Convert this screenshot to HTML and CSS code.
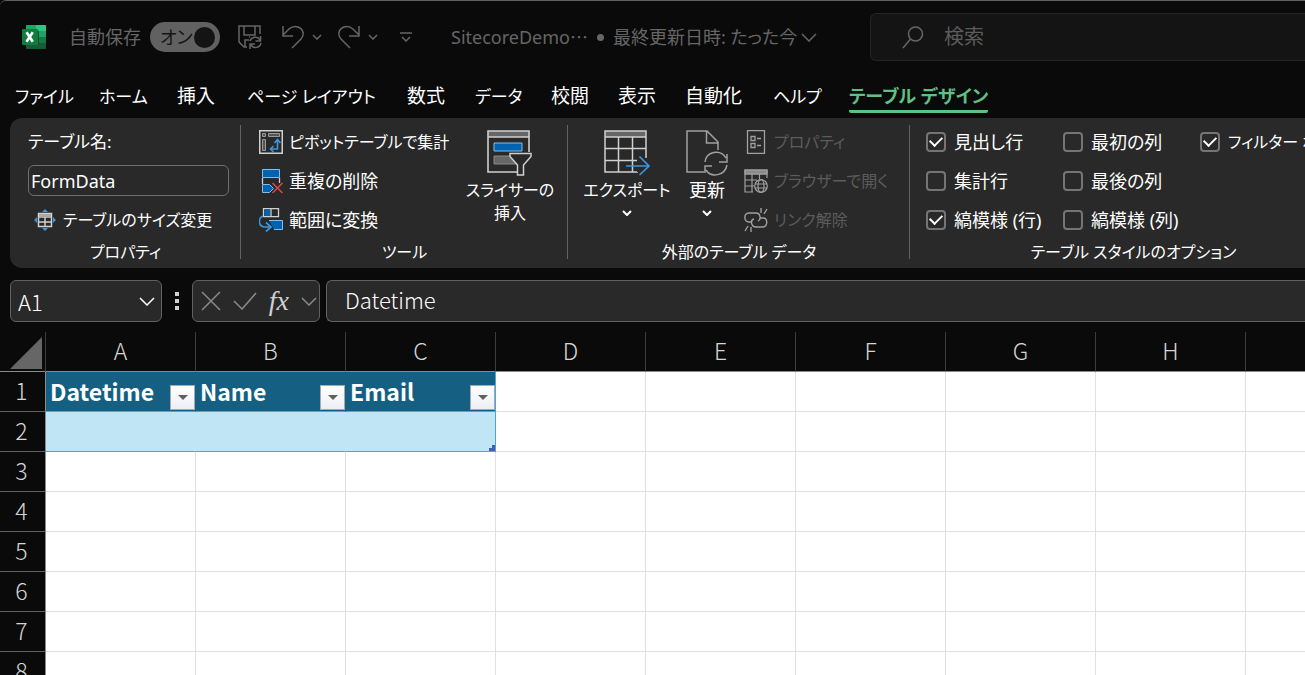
FILE: index.html
```html
<!DOCTYPE html>
<html lang="ja">
<head>
<meta charset="utf-8">
<meta name="viewport" content="width=device-width, initial-scale=1">
<title>SitecoreDemo</title>
<link rel="stylesheet" href="styles.css">
</head>
<body>
<header class="titlebar">
  <div class="quick">
    <svg class="logo" width="24" height="24" viewBox="0 0 24 24" aria-label="Excel"><rect x="4" width="20" height="24" rx="1" fill="#185c37"/><path d="M5 0h9v6H4V1q0-1 1-1z" fill="#21a366"/><path d="M14 0h9q1 0 1 1v5H14z" fill="#33c481"/><path d="M4 6h10v6H4z" fill="#107c41"/><path d="M14 6h10v6H14z" fill="#21a366"/><path d="M14 12h10v6H14z" fill="#107c41"/><path d="M4 5h11q2 0 2 2v11q0 2-2 2H4z" fill="#0b4d29"/><rect y="4" width="16" height="16" rx="1" fill="#107c41"/><path d="M4.500 7.300 10.800 16.700M10.800 7.300 4.500 16.700" stroke="#fff" stroke-width="2.600" fill="none"/></svg>
    <span class="autosave" id="autosave">自動保存</span>
    <button class="switch" role="switch" aria-checked="true" aria-labelledby="autosave"><span>オン</span><i class="knob"></i></button>
    <button class="icon save" aria-label="保存"><svg width="24" height="24" viewBox="0 0 24 24"><path d="M9 22H6L1 17V1h21v8M6 1v9h11V1M7 22v-7h4M12 12h-1" /><path d="M12 16a5.500 5.500 0 0 1 10-1M22.500 11v5h-5M23 18a5.500 5.500 0 0 1-10 2M12 24v-5h5"/></svg></button>
    <button class="icon undo" aria-label="元に戻す"><svg width="24" height="24" viewBox="0 0 24 24"><path d="M2 1v10h10M2 10 8 4c8-7 19 2 12 10l-9 9"/></svg></button>
    <button class="icon caret" aria-label="元に戻すの一覧"><svg width="10" height="6" viewBox="0 0 10 6"><path d="m1 1 4 4 4-4"/></svg></button>
    <button class="icon redo" aria-label="やり直し"><svg width="24" height="24" viewBox="0 0 24 24"><path d="M22 1v10H12M22 10l-6-6C8-3-3 6 4 14l9 9"/></svg></button>
    <button class="icon caret" aria-label="やり直しの一覧"><svg width="10" height="6" viewBox="0 0 10 6"><path d="m1 1 4 4 4-4"/></svg></button>
    <button class="icon customize" aria-label="クイック アクセス ツール バーのユーザー設定"><svg width="12" height="10" viewBox="0 0 12 10"><path d="M0 1h12M2 5l4 4 4-4"/></svg></button>
  </div>
  <button class="doc"><span>SitecoreDemo⋯</span><i class="dot"></i><span>最終更新日時: たった今</span><svg width="16" height="9" viewBox="0 0 16 9"><path d="m1 1 7 7 7-7"/></svg></button>
  <label class="search"><svg width="22" height="23" viewBox="0 0 22 23"><circle cx="13.500" cy="8" r="7"/><path d="M8.500 13 1 22"/></svg><input type="search" placeholder="検索" aria-label="検索"></label>
</header>

<nav class="tabs">
  <a class="kana" href="#file">ファイル</a><a class="kana" href="#home">ホーム</a><a href="#insert">挿入</a><a class="kana" href="#layout">ページ レイアウト</a><a href="#formulas">数式</a><a class="kana" href="#data">データ</a><a href="#review">校閲</a><a href="#view">表示</a><a href="#automate">自動化</a><a class="kana" href="#help">ヘルプ</a><a class="active" href="#design" aria-current="page">テーブル デザイン</a>
</nav>

<main class="ribbon">
  <section class="group props">
    <div class="rows">
      <label for="tname">テーブル名:</label>
      <input class="tname" id="tname" value="FormData">
      <button class="cmd kana resize"><svg width="24" height="24" viewBox="0 0 24 24"><path d="m12 1 3 3H9zM12 23l3-3H9zM1 12l3-3v6zM23 12l-3-3v6z" fill="#3a96dd"/><path d="M5.500 5.500h13v13h-13zM5.500 9h13M12 9v9M6 14h12" fill="none" stroke="#d0d0d0" stroke-width="1.500"/><path d="M6 6h12v2H6z" fill="#aaa"/></svg>テーブルのサイズ変更</button>
    </div>
    <h2>プロパティ</h2>
  </section>

  <section class="group tools">
    <div class="cols">
      <div class="rows">
        <button class="cmd kana"><svg width="24" height="24" viewBox="0 0 24 24"><path d="M.75.75h22.500v22.500H.75z" fill="none" stroke="#d0d0d0" stroke-width="1.500"/><path d="M3.500 3.500h3v3h-3zM9.500 3.500h11v3h-11zM3.500 9.500h3v11h-3z" fill="#555" stroke="#999"/><path d="M12 19h6.500v-8M15.500 13l3-3.500 3 3.500M14.500 16l-3 3 3 3" fill="none" stroke="#3a96dd" stroke-width="1.600"/></svg>ピボットテーブルで集計</button>
        <button class="cmd"><svg width="24" height="24" viewBox="0 0 24 24"><path d="M3.500.5h17v8h-17z" fill="#0063b1" stroke="#83beec"/><path d="M3.500 9v6M20.500 9v5" stroke="#d0d0d0" stroke-width="1.300"/><path d="M3.500 15.500h7l4 4-4 4h-7z" fill="#0063b1" stroke="#83beec"/><path d="m13.500 14 10 10M23.500 14l-10 10" stroke="#e04848" stroke-width="1.500"/></svg>重複の削除</button>
        <button class="cmd"><svg width="24" height="24" viewBox="0 0 24 24"><path d="M4.500.7h15v8h-15zM12 1v7.500" fill="none" stroke="#d0d0d0" stroke-width="1.300"/><path d="M5.500 1.500H11v6.500H5.500z" fill="#0063b1"/><path d="M10 12.500h13.500v9H15" fill="#0063b1" stroke="#83beec"/><path d="M4 8C-1 10-1 18 5 19h7M7 14.500l5 4.500-5 4.500" fill="none" stroke="#3a96dd" stroke-width="1.700"/></svg>範囲に変換</button>
      </div>
      <button class="big kana slicer"><svg width="46" height="46" viewBox="0 0 46 46"><path d="M1 1h41v6H1z" fill="#666"/><path d="M42 22V1H1v41h29M1 7h41" fill="none" stroke="#d0d0d0" stroke-width="1.600"/><path d="M7 13h28v8H7z" fill="#0063b1" stroke="#83beec"/><path d="M7 26h17l5 6v2H7z" fill="#666" stroke="#888"/><path d="M23 23.500h21v3L36.500 35v10h-6V35L23 26.500z" fill="#292929" stroke="#d0d0d0" stroke-width="1.500"/></svg><span>スライサーの<br>挿入</span></button>
    </div>
    <h2>ツール</h2>
  </section>

  <section class="group external">
    <div class="cols">
      <button class="big kana export"><svg width="46" height="46" viewBox="0 0 46 46"><path d="M1 1h41v6H1z" fill="#666"/><path d="M42 28V1H1v41h33M1 7h41M1 18.500h41M1 30.500h32M14.500 7v35M28.500 7v35" fill="none" stroke="#d0d0d0" stroke-width="1.500"/><path d="M33 28v14h10V28z" fill="#292929"/><path d="M22 36h23M35.500 26.500 45 36l-9.500 9" fill="none" stroke="#3a96dd" stroke-width="1.700"/></svg><span>エクスポート</span><svg class="down" width="10" height="6" viewBox="0 0 10 6"><path d="m1 1 4 4 4-4"/></svg></button>
      <button class="big refresh"><svg width="42" height="46" viewBox="0 0 42 46" fill="none" stroke="#a0a0a0" stroke-width="1.500"><path d="M18 42H1V1h20l11 11v8M20.500 1v12H32"/><path d="M19 32c1-10 15-14 21-4M41 24v8h-8M41 35c-2 11-16 13-21 5M19 43v-7h7"/></svg><span>更新</span><svg class="down" width="10" height="6" viewBox="0 0 10 6"><path d="m1 1 4 4 4-4"/></svg></button>
      <div class="rows">
        <button class="cmd kana" disabled><svg width="24" height="24" viewBox="0 0 24 24" fill="none" stroke="#a0a0a0" stroke-width="1.300"><path d="M3.500.7h17v22.600h-17zM7 6.500h4v4H7zM7 13.500h4v4H7zM13 8.500h4M13 15.500h4"/></svg>プロパティ</button>
        <button class="cmd kana" disabled><svg width="24" height="24" viewBox="0 0 24 24" fill="none" stroke="#a0a0a0" stroke-width="1.200"><path d="M1 1h22v4H1z" fill="#888"/><path d="M9 23H1V1h22v8M1 5h22M1 11h12M1 17h9M8 5v18M15.500 5v5"/><circle cx="17" cy="17" r="6.300"/><ellipse cx="17" cy="17" rx="3" ry="6.300"/><path d="M11 15h12M11 19h12"/></svg>ブラウザーで開く</button>
        <button class="cmd kana" disabled><svg width="24" height="24" viewBox="0 0 24 24" fill="none" stroke="#a0a0a0" stroke-width="1.400"><path d="M8 14H5C0 14-1 5 5 5h7c5 0 5 7 2 8M16 10h3c5 0 5 8 0 9h-7c-5 0-6-7-2-8M17 5V0M20 6l3-5M7 19v5M4 18l-3 5"/></svg>リンク解除</button>
      </div>
    </div>
    <h2>外部のテーブル データ</h2>
  </section>

  <section class="group options">
    <div class="checks">
      <label><input type="checkbox" checked>見出し行</label>
      <label><input type="checkbox">最初の列</label>
      <label class="kana"><input type="checkbox" checked>フィルター ボタン</label>
      <label><input type="checkbox">集計行</label>
      <label><input type="checkbox">最後の列</label>
      <span></span>
      <label><input type="checkbox" checked>縞模様 (行)</label>
      <label><input type="checkbox">縞模様 (列)</label>
    </div>
    <h2>テーブル スタイルのオプション</h2>
  </section>
</main>

<div class="formula">
  <div class="box namebox"><input value="A1" aria-label="名前ボックス"><button class="icon" aria-label="名前の一覧"><svg width="16" height="9" viewBox="0 0 16 9"><path d="m1 1 7 7 7-7"/></svg></button></div>
  <div class="grip"><i></i><i></i><i></i></div>
  <div class="box actions">
    <button class="icon dim" aria-label="キャンセル"><svg width="20" height="20" viewBox="0 0 20 20"><path d="m1 1 18 18M19 1 1 19"/></svg></button>
    <button class="icon dim" aria-label="入力"><svg width="24" height="18" viewBox="0 0 24 18"><path d="m1 9 8 8L23 1"/></svg></button>
    <button class="icon fx" aria-label="関数の挿入">fx</button>
    <button class="icon dim" aria-label="関数の一覧"><svg width="16" height="9" viewBox="0 0 16 9"><path d="m1 1 7 7 7-7"/></svg></button>
  </div>
  <input class="box value" value="Datetime" aria-label="数式バー">
</div>

<div class="sheet">
  <table>
    <colgroup><col class="rowcol"><col class="cell"><col class="cell"><col class="cell"><col class="cell"><col class="cell"><col class="cell"><col class="cell"><col class="cell"><col></colgroup>
    <thead><tr><th class="corner"><svg width="32" height="32" viewBox="0 0 32 32"><path d="M32 0v32H0z" fill="#666"/></svg></th><th>A</th><th>B</th><th>C</th><th>D</th><th>E</th><th>F</th><th>G</th><th>H</th><th></th></tr></thead>
    <tbody>
      <tr class="head"><th>1</th>
        <td><div class="field">Datetime<button aria-label="Datetime フィルター"><i></i></button></div></td>
        <td><div class="field">Name<button aria-label="Name フィルター"><i></i></button></div></td>
        <td><div class="field">Email<button aria-label="Email フィルター"><i></i></button></div></td>
        <td></td><td></td><td></td><td></td><td></td><td></td></tr>
      <tr class="band"><th>2</th><td></td><td></td><td><div class="corner-mark"><svg width="6" height="6" viewBox="0 0 6 6"><path d="M3 0h3v6H0V3h3z" fill="#4a5ab5"/></svg></div></td><td></td><td></td><td></td><td></td><td></td><td></td></tr>
      <tr><th>3</th><td></td><td></td><td></td><td></td><td></td><td></td><td></td><td></td><td></td></tr>
      <tr><th>4</th><td></td><td></td><td></td><td></td><td></td><td></td><td></td><td></td><td></td></tr>
      <tr><th>5</th><td></td><td></td><td></td><td></td><td></td><td></td><td></td><td></td><td></td></tr>
      <tr><th>6</th><td></td><td></td><td></td><td></td><td></td><td></td><td></td><td></td><td></td></tr>
      <tr><th>7</th><td></td><td></td><td></td><td></td><td></td><td></td><td></td><td></td><td></td></tr>
      <tr><th>8</th><td></td><td></td><td></td><td></td><td></td><td></td><td></td><td></td><td></td></tr>
    </tbody>
  </table>
</div>
</body>
</html>
```
FILE: styles.css
```css
* { box-sizing: border-box; }
body {
  margin: 0;
  height: 100vh;
  display: flex;
  flex-direction: column;
  overflow: hidden;
  background: #0a0a0a;
  color: #fff;
  font: 18px/24px "Noto Sans", "Noto Sans CJK JP", sans-serif;
  font-feature-settings: "palt";
}
button, input { font: inherit; font-feature-settings: inherit; color: inherit; }
button { background: none; border: 0; padding: 0; white-space: nowrap; }
input { min-width: 0; outline: 0; }
svg { display: block; flex: none; }
.kana { font-size: 16px; }

.titlebar {
  flex: none;
  display: flex;
  align-items: center;
  height: 73px;
  border-top: 1px solid #616161;
  border-top-left-radius: 6px;
  color: #666;
}
.quick { display: flex; align-items: center; width: 451px; flex: none; padding-left: 22px; }
.autosave { width: 81px; margin-left: 23px; }
.switch {
  display: flex;
  align-items: center;
  justify-content: space-between;
  width: 70px;
  height: 30px;
  padding: 0 5px 0 10px;
  border-radius: 15px;
  background: #616161;
  color: #141414;
}
.knob { width: 21px; height: 21px; border-radius: 50%; background: #141414; }
.icon { display: flex; align-items: center; justify-content: center; }
.icon svg, .doc svg, .search svg, .down { fill: none; stroke: currentColor; stroke-width: 1.5; }
.save { margin-left: 18px; }
.undo { margin-left: 19px; }
.redo { margin-left: 15px; }
.caret { margin-left: 7px; }
.customize { margin-left: 22px; }
.doc { display: flex; align-items: center; width: 419px; flex: none; }
.dot { width: 7px; height: 7px; margin: 0 9px; border-radius: 50%; background: #666; }
.doc svg { margin-left: 4px; }
.search {
  flex: 1;
  display: flex;
  align-items: center;
  height: 48px;
  padding-left: 31px;
  gap: 20px;
  border: 1px solid #242424;
  border-right: 0;
  border-radius: 6px 0 0 6px;
  background: #141414;
}
.search input { flex: 1; border: 0; padding: 0; background: none; font-size: 20px; }
.search input::placeholder { color: #5c5c5c; opacity: 1; }

.tabs {
  flex: none;
  display: grid;
  grid-template-columns: 84px 78px 70px 160px 68px 76px 67px 67px 88px 76px auto;
  justify-content: start;
  height: 45px;
  padding: 10px 0 5px 15px;
  font-size: 19px;
}
.tabs a { color: #fff; text-decoration: none; white-space: nowrap; line-height: 27px; }
.tabs .kana { font-size: 17px; }
.tabs .active { color: #5fbf84; font-size: 18px; font-weight: 700; border-bottom: 3px solid #5fbf84; border-radius: 2px; }

.ribbon {
  flex: none;
  display: flex;
  margin-left: 10px;
  padding: 4px 0 2px;
  border-radius: 12px 0 0 12px;
  background: #292929;
  overflow: hidden;
}
.group { display: flex; flex-direction: column; flex: none; position: relative; }
.group::after { content: ""; position: absolute; right: 0; top: 3px; bottom: 7px; width: 1px; background: #616161; }
.group h2 { margin: 0; font-size: 16px; font-weight: 400; line-height: 27px; text-align: center; }
.rows { display: grid; grid-template-rows: repeat(3, 39px); align-items: center; justify-items: start; }
.cols { display: flex; }
.cmd { display: flex; align-items: center; gap: 6px; }
.cmd:disabled { color: #5c5c5c; }
.props { width: 231px; }
.props .rows { padding: 0 12px 0 18px; justify-items: stretch; }
.props label { font-size: 17px; }
.tname { height: 31px; padding: 0 2px; border: 1px solid #707070; border-radius: 6px; background: #292929; }
.resize { padding-left: 5px; }
.tools { width: 327px; }
.tools .rows { width: 211px; padding-left: 18px; }
.external { width: 342px; }
.external .rows { padding-left: 5px; }
.big { display: flex; flex-direction: column; align-items: center; padding-top: 8px; line-height: 23px; }
.big > span { margin-top: 3px; }
.slicer { flex: 1; }
.export { width: 107px; padding-left: 11px; }
.refresh { width: 64px; }
.down { margin-top: 8px; stroke-width: 2; }
.options { flex: 1 0 auto; width: 447px; }
.options::after { display: none; }
.checks { display: grid; grid-template-columns: 137px 137px 200px; grid-template-rows: repeat(3, 39px); padding-left: 16px; }
.checks label { display: flex; align-items: center; gap: 8px; white-space: nowrap; }
.checks input {
  appearance: none;
  display: grid;
  place-items: center;
  flex: none;
  width: 20px;
  height: 20px;
  margin: 0;
  border: 2px solid #757575;
  border-radius: 4px;
}
.checks input:checked::before {
  content: "";
  width: 10px;
  height: 6px;
  margin-bottom: 3px;
  border: solid #fff;
  border-width: 0 0 2px 2px;
  transform: rotate(-45deg);
}

.formula { flex: none; display: flex; height: 64px; padding: 12px 0 10px 10px; font-family: "Noto Sans CJK JP", sans-serif; font-size: 22px; font-weight: 300; }
.box { display: flex; align-items: center; height: 42px; border: 1px solid #616161; border-radius: 6px; background: #292929; }
.namebox { width: 152px; padding: 0 6px 0 7px; }
.namebox input { flex: 1; width: 60px; padding: 0; border: 0; background: none; }
.grip { display: grid; align-content: center; justify-content: center; gap: 3px; width: 30px; }
.grip i { width: 4px; height: 4px; background: #d0d0d0; }
.actions { width: 128px; padding: 0 2px 0 8px; justify-content: space-between; }
.dim { color: #8a8a8a; }
.fx { font: italic 400 28px/30px "Liberation Serif", serif; color: #d0d0d0; }
.value { flex: 1; margin-left: 6px; padding: 0 18px 4px; border-right: 0; border-radius: 6px 0 0 6px; }

.sheet { flex: 1; min-height: 0; overflow: hidden; font: 300 23px/30px "Noto Sans CJK JP", sans-serif; }
table { width: 100%; table-layout: fixed; border-collapse: separate; border-spacing: 0; }
.rowcol { width: 46px; }
.cell { width: 150px; }
th, td { height: 40px; padding: 0; border: solid #e0e0e0; border-width: 0 1px 1px 0; }
th { padding-bottom: 4px; background: #0a0a0a; border-color: #616161; color: #d6d6d6; font-weight: 300; }
thead th { border-right-color: #3d3d3d; border-bottom-color: #8a8a8a; }
tbody th { border-right-color: #8a8a8a; padding-right: 2px; }
tr > :last-child { border-right: 0; }
.corner { padding: 3px 0 0 10px; }
td { background: #fff; }
.head td:nth-child(-n+4) { background: #156082; border-color: #45a9dc; border-right-color: #156082; }
.band td:nth-child(-n+4) { background: #c0e6f5; border-color: #45a9dc; border-right-color: #c0e6f5; }
.head td:nth-child(4), .band td:nth-child(4) { border-right-color: #45a9dc; }
.field { display: flex; align-items: flex-end; justify-content: space-between; height: 39px; padding-left: 4px; font-weight: 700; line-height: 40px; }
.field button { display: grid; place-items: center; width: 25px; height: 25px; margin-bottom: 1px; border: 1px solid #a8a8b0; background: linear-gradient(#fff, #eceff5); }
.field i { border: solid transparent; border-width: 5px 5px 0; border-top-color: #606060; }
.corner-mark { display: flex; align-items: flex-end; justify-content: flex-end; height: 39px; }
```
